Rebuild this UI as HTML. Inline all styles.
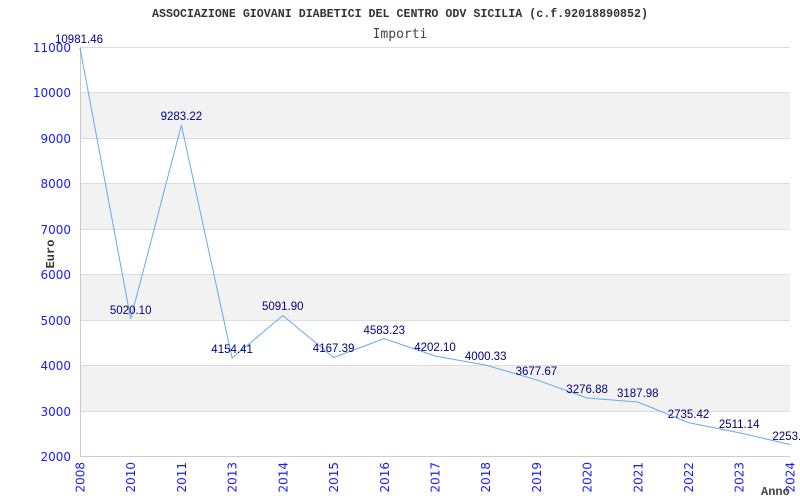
<!DOCTYPE html>
<html><head><meta charset="utf-8"><style>
html,body{margin:0;padding:0;background:#fff;}
svg{display:block;}
</style></head><body>
<svg width="800" height="500" xmlns="http://www.w3.org/2000/svg">
<rect width="800" height="500" fill="#fff"/>
<g fill="#f2f2f2">
<rect x="80" y="92" width="710" height="46"/>
<rect x="80" y="183" width="710" height="46"/>
<rect x="80" y="274" width="710" height="46"/>
<rect x="80" y="365" width="710" height="46"/>
</g>
<g stroke="#dddddd" stroke-width="1">
<line x1="80" y1="47.5" x2="790" y2="47.5"/>
<line x1="80" y1="92.5" x2="790" y2="92.5"/>
<line x1="80" y1="138.5" x2="790" y2="138.5"/>
<line x1="80" y1="183.5" x2="790" y2="183.5"/>
<line x1="80" y1="229.5" x2="790" y2="229.5"/>
<line x1="80" y1="274.5" x2="790" y2="274.5"/>
<line x1="80" y1="320.5" x2="790" y2="320.5"/>
<line x1="80" y1="365.5" x2="790" y2="365.5"/>
<line x1="80" y1="411.5" x2="790" y2="411.5"/>
</g>
<g stroke="#cccccc" stroke-width="1">
<line x1="80.5" y1="47" x2="80.5" y2="456"/>
<line x1="80" y1="456.5" x2="790" y2="456.5"/>
</g>
<polyline fill="none" stroke="#66aaee" stroke-width="1" points="80,47.9 130.7,318.8 181.4,125.1 232.1,358.1 282.8,315.5 333.6,357.5 384.3,338.6 435,356 485.7,365.1 536.4,379.8 587.1,398 637.8,402 688.5,422.6 739.2,432.8 790,444.5"/>
<g font-family="Liberation Sans, sans-serif" font-size="11.5" fill="#000080" text-anchor="middle">
<text x="79" y="43">10981.46</text>
<text x="130.7" y="314">5020.10</text>
<text x="181.4" y="120">9283.22</text>
<text x="232.1" y="353">4154.41</text>
<text x="282.8" y="310">5091.90</text>
<text x="333.6" y="352">4167.39</text>
<text x="384.3" y="334">4583.23</text>
<text x="435" y="351">4202.10</text>
<text x="485.7" y="360">4000.33</text>
<text x="536.4" y="375">3677.67</text>
<text x="587.1" y="393">3276.88</text>
<text x="637.8" y="397">3187.98</text>
<text x="688.5" y="418">2735.42</text>
<text x="739.2" y="428">2511.14</text>
<text x="790" y="440">2253.9</text>
</g>
<g font-family="DejaVu Sans, sans-serif" font-size="12" fill="#1a1aff" text-anchor="end">
<text x="71" y="52">11000</text>
<text x="71" y="97">10000</text>
<text x="71" y="143">9000</text>
<text x="71" y="188">8000</text>
<text x="71" y="234">7000</text>
<text x="71" y="279">6000</text>
<text x="71" y="325">5000</text>
<text x="71" y="370">4000</text>
<text x="71" y="416">3000</text>
<text x="71" y="461">2000</text>
</g>
<g font-family="DejaVu Sans, sans-serif" font-size="12" fill="#1a1aff" text-anchor="end">
<text transform="translate(84.5,462) rotate(-90)">2008</text>
<text transform="translate(135.2,462) rotate(-90)">2010</text>
<text transform="translate(185.9,462) rotate(-90)">2011</text>
<text transform="translate(236.6,462) rotate(-90)">2013</text>
<text transform="translate(287.3,462) rotate(-90)">2014</text>
<text transform="translate(338.1,462) rotate(-90)">2015</text>
<text transform="translate(388.8,462) rotate(-90)">2016</text>
<text transform="translate(439.5,462) rotate(-90)">2017</text>
<text transform="translate(490.2,462) rotate(-90)">2018</text>
<text transform="translate(540.9,462) rotate(-90)">2019</text>
<text transform="translate(591.6,462) rotate(-90)">2020</text>
<text transform="translate(642.3,462) rotate(-90)">2021</text>
<text transform="translate(693,462) rotate(-90)">2022</text>
<text transform="translate(743.7,462) rotate(-90)">2023</text>
<text transform="translate(794.5,462) rotate(-90)">2024</text>
</g>
<text x="152" y="17" textLength="496" lengthAdjust="spacingAndGlyphs" font-family="Liberation Mono, monospace" font-size="11.5" font-weight="bold" fill="#333">ASSOCIAZIONE GIOVANI DIABETICI DEL CENTRO ODV SICILIA (c.f.92018890852)</text>
<text x="400" y="38" text-anchor="middle" font-family="DejaVu Sans Mono, monospace" font-size="13" fill="#444">Importi</text>
<text transform="translate(54,254) rotate(-90)" text-anchor="middle" font-family="Liberation Mono, monospace" font-size="12" font-weight="bold" fill="#333">Euro</text>
<text x="761" y="495" font-family="Liberation Mono, monospace" font-size="12" font-weight="bold" fill="#444">Anno</text>
</svg>
</body></html>
